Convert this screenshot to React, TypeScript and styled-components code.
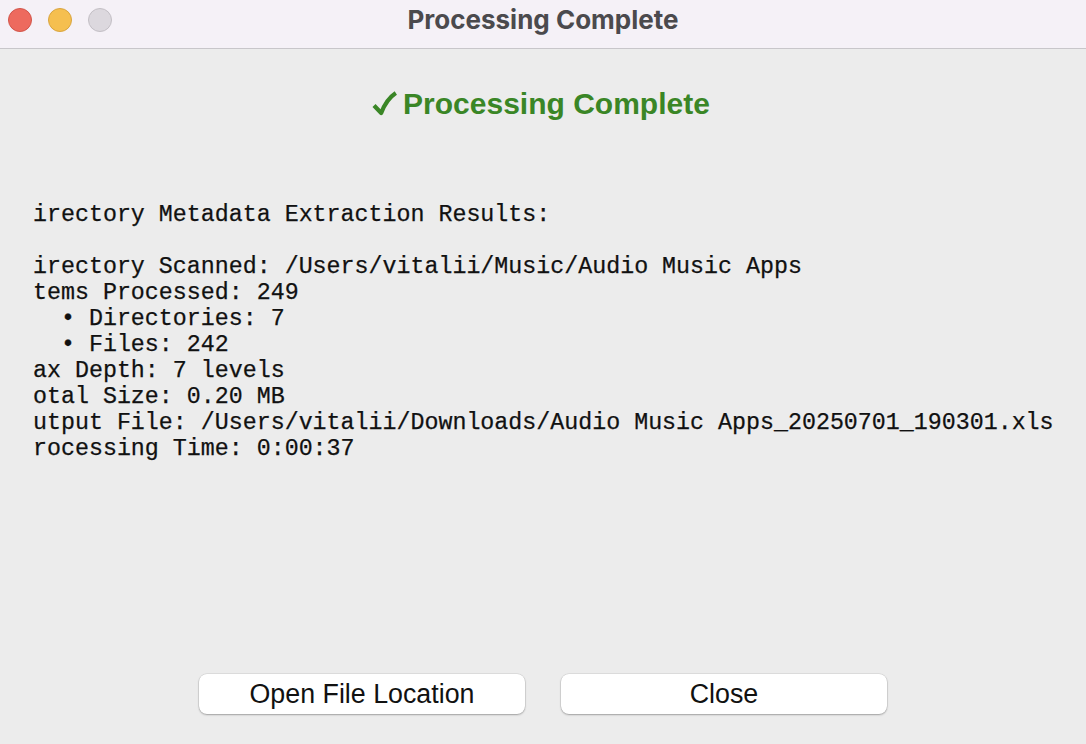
import React from 'react';
import styled, { createGlobalStyle } from 'styled-components';

const GlobalStyle = createGlobalStyle`
  html, body {
    margin: 0;
    padding: 0;
    background: #ececec;
  }
  * { box-sizing: border-box; }
`;

const Window = styled.div`
  width: 1086px;
  height: 744px;
  display: flex;
  flex-direction: column;
  background: #ececec;
  overflow: hidden;
`;

const TitleBar = styled.div`
  height: 49px;
  padding: 8px 8px 0 8px;
  display: grid;
  grid-template-columns: 1fr auto 1fr;
  align-items: start;
  background: #f5f1f7;
  border-bottom: 1px solid #c8c6ca;
`;

const Lights = styled.div`
  display: flex;
  gap: 16px;
`;

const Light = styled.span<{ $fill: string; $edge: string }>`
  width: 24px;
  height: 24px;
  border-radius: 50%;
  background: ${p => p.$fill};
  border: 1px solid ${p => p.$edge};
`;

const WindowTitle = styled.div`
  font-family: Inter, "Liberation Sans", sans-serif;
  font-weight: 700;
  font-size: 26px;
  line-height: 24px;
  color: #4b4a4d;
`;

const Heading = styled.h1`
  margin: 37px 0 0 0;
  padding-right: 4px;
  display: flex;
  justify-content: center;
  align-items: center;
  gap: 6px;
  font-family: "Liberation Sans", Arial, sans-serif;
  font-weight: 700;
  font-size: 30px;
  line-height: 36px;
  color: #3a8626;
`;

const Check = styled.svg`
  width: 25px;
  height: 26px;
  fill: none;
  stroke: currentColor;
`;

const Report = styled.pre`
  margin: 80px 0 0 0;
  padding: 0 0 0 33px;
  font-family: "Liberation Mono", "Courier New", monospace;
  font-size: 23.3px;
  line-height: 26px;
  color: #111;
  white-space: pre;
  -webkit-text-stroke: 0.25px #111;
`;

const ButtonRow = styled.div`
  margin-top: auto;
  padding-bottom: 30px;
  display: flex;
  justify-content: center;
  gap: 36px;
`;

const Button = styled.button`
  width: 326px;
  height: 40px;
  border: none;
  border-radius: 8px;
  background: #fff;
  box-shadow: 0 0 0 0.5px rgba(0, 0, 0, 0.12), 0 1px 2px rgba(0, 0, 0, 0.28);
  font-family: "Liberation Sans", Arial, sans-serif;
  font-size: 26.8px;
  color: #111;
  padding: 0;
  cursor: pointer;
`;

const reportText = [
  'irectory Metadata Extraction Results:',
  '',
  'irectory Scanned: /Users/vitalii/Music/Audio Music Apps',
  'tems Processed: 249',
  '  \u2022 Directories: 7',
  '  \u2022 Files: 242',
  'ax Depth: 7 levels',
  'otal Size: 0.20 MB',
  'utput File: /Users/vitalii/Downloads/Audio Music Apps_20250701_190301.xls',
  'rocessing Time: 0:00:37',
].join('\n');

export default function App() {
  return (
    <Window>
      <GlobalStyle />
      <TitleBar>
        <Lights>
          <Light $fill="#ed6a5e" $edge="#d2554a" />
          <Light $fill="#f5bf4f" $edge="#d9a53f" />
          <Light $fill="#dcd8de" $edge="#c3bfc5" />
        </Lights>
        <WindowTitle>Processing Complete</WindowTitle>
        <div />
      </TitleBar>
      <Heading>
        <Check viewBox="0 0 25 26" aria-hidden>
          <path d="M2 14.5 L9.2 22 C12.4 13.5 17 6.5 23.8 2" strokeWidth="4.2" strokeLinejoin="round" />
        </Check>
        Processing Complete
      </Heading>
      <Report>{reportText}</Report>
      <ButtonRow>
        <Button>Open File Location</Button>
        <Button>Close</Button>
      </ButtonRow>
    </Window>
  );
}
